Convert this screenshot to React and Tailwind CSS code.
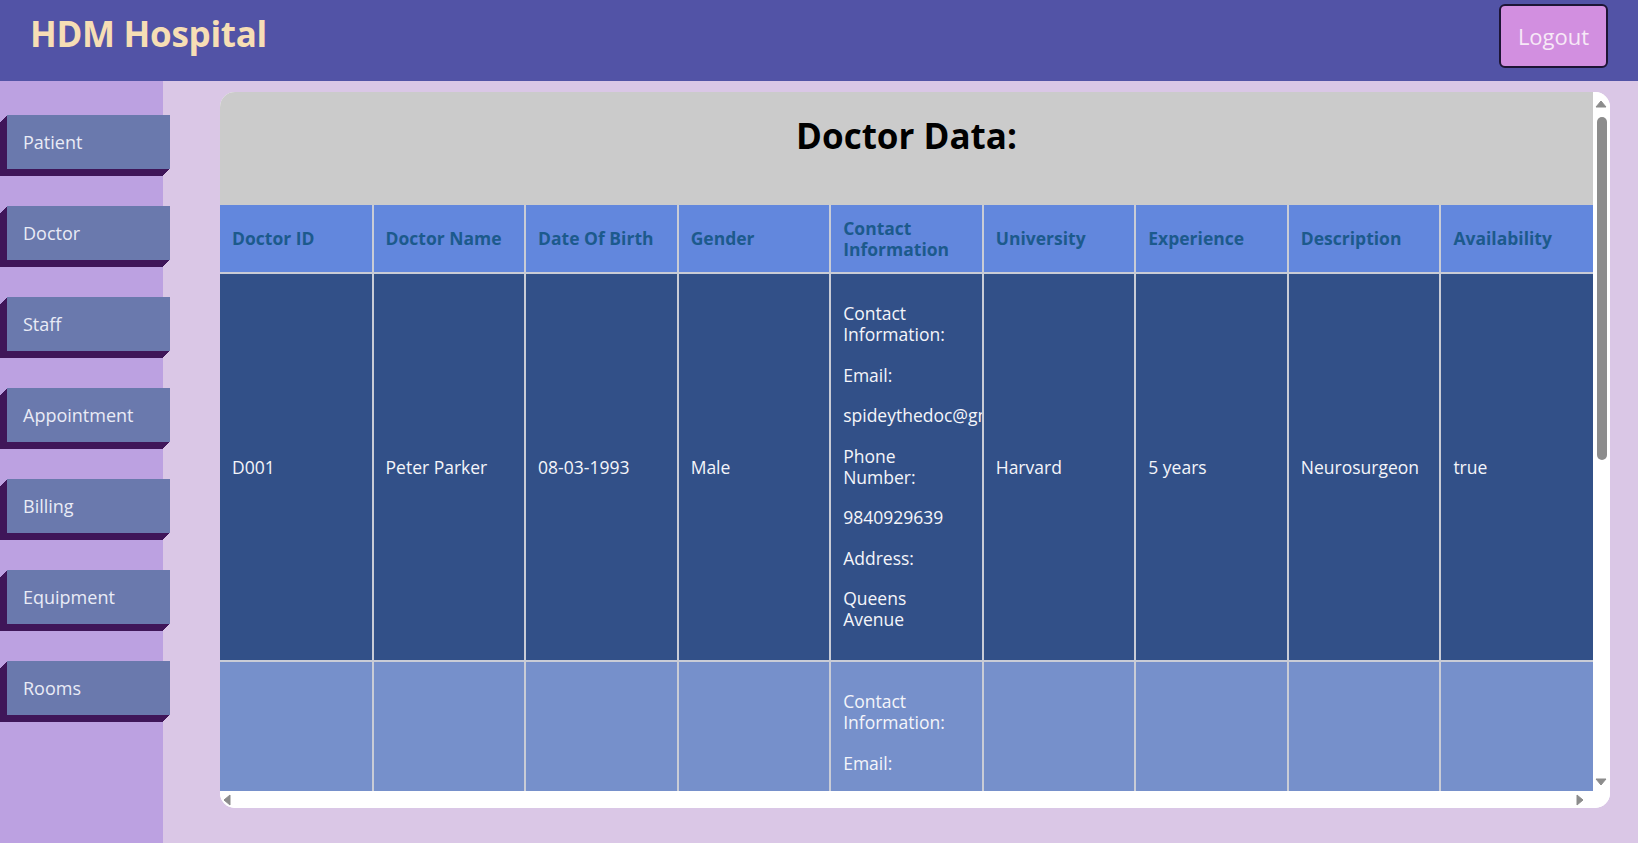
import React from 'react'

const menu = ['Patient', 'Doctor', 'Staff', 'Appointment', 'Billing', 'Equipment', 'Rooms']

const columns = [
  'Doctor ID',
  'Doctor Name',
  'Date Of Birth',
  'Gender',
  'Contact Information',
  'University',
  'Experience',
  'Description',
  'Availability',
]

const doctors = [
  {
    id: 'D001',
    name: 'Peter Parker',
    dob: '08-03-1993',
    gender: 'Male',
    email: 'spideythedoc@gmail.com',
    phone: '9840929639',
    address: 'Queens\nAvenue',
    university: 'Harvard',
    experience: '5 years',
    description: 'Neurosurgeon',
    available: 'true',
  },
  {
    id: 'D002',
    name: 'Stephen Strange',
    dob: '11-18-1980',
    gender: 'Male',
    email: 'strange@sanctum.org',
    phone: '9840112233',
    address: 'Bleecker\nStreet',
    university: 'Columbia',
    experience: '15 years',
    description: 'Cardiologist',
    available: 'false',
  },
  {
    id: 'D003',
    name: 'Jane Foster',
    dob: '04-22-1988',
    gender: 'Female',
    email: 'jfoster@culver.edu',
    phone: '9840556677',
    address: 'Puente\nAntiguo',
    university: 'Culver',
    experience: '8 years',
    description: 'Pediatrician',
    available: 'true',
  },
]

const bevel =
  'shadow-[-1px_1px_0_#3f1659,-2px_2px_0_#3f1659,-3px_3px_0_#3f1659,-4px_4px_0_#3f1659,-5px_5px_0_#3f1659,-6px_6px_0_#3f1659,-7px_7px_0_#3f1659]'

function Arrow({ dir, className = '' }) {
  const pts = {
    up: '1,7 6,1 11,7',
    down: '1,1 6,7 11,1',
    left: '7,1 1,6 7,11',
    right: '1,1 7,6 1,11',
  }[dir]
  const vertical = dir === 'up' || dir === 'down'
  return (
    <svg
      width={vertical ? 12 : 8}
      height={vertical ? 8 : 12}
      viewBox={vertical ? '0 0 12 8' : '0 0 8 12'}
      className={`block ${className}`}
    >
      <polygon points={pts} fill="#8c8c8c" stroke="#8c8c8c" strokeWidth="1" strokeLinejoin="round" />
    </svg>
  )
}

function Sidebar() {
  return (
    <aside className="w-[163px] shrink-0 bg-[#bca1e1] pt-[34px]">
      <nav className="flex flex-col gap-[37px]">
        {menu.map((item) => (
          <button
            key={item}
            className={`ml-[7px] w-[163px] h-[54px] bg-[#6a79ad] text-left pl-[16px] text-[18px] text-[#e9ebf6] relative z-10 ${bevel}`}
          >
            {item}
          </button>
        ))}
      </nav>
    </aside>
  )
}

function ContactCell({ doc }) {
  const parts = [
    'Contact\nInformation:',
    'Email:',
    doc.email,
    'Phone\nNumber:',
    doc.phone,
    'Address:',
    doc.address,
  ]
  return (
    <div className="flex flex-col gap-[19.5px] py-[18px] overflow-hidden">
      {parts.map((p, i) => (
        <p key={i} className="leading-[21px] whitespace-pre">
          {p}
        </p>
      ))}
    </div>
  )
}

function DoctorTable() {
  return (
    <div className="overflow-hidden min-h-0 min-w-0">
      <div className="h-[113px] bg-[#cbcbcb] flex justify-center pt-[20px]">
        <h2 className="text-[35px] leading-[48px] font-bold text-black">Doctor Data:</h2>
      </div>
      <table className="w-full table-fixed border-collapse text-[17.5px]">
        <thead>
          <tr className="h-[68px] bg-[#6287dd]">
            {columns.map((c) => (
              <th
                key={c}
                className="border-2 border-t-0 border-[#c9ccd6] first:border-l-0 last:border-r-0 px-[12px] text-left font-bold text-[#1c5a8c] leading-[21px]"
              >
                {c}
              </th>
            ))}
          </tr>
        </thead>
        <tbody>
          {doctors.map((d, i) => (
            <tr key={d.id} className={`${i % 2 === 0 ? 'bg-[#325088]' : 'bg-[#7690cb]'} text-[#f4f5fa]`}>
              {[d.id, d.name, d.dob, d.gender].map((v, j) => (
                <td key={j} className="border-2 border-[#c9ccd6] first:border-l-0 px-[12px] align-middle">
                  {v}
                </td>
              ))}
              <td className="border-2 border-[#c9ccd6] pl-[12px] pr-0 pt-[11px] pb-[12px] align-middle">
                <ContactCell doc={d} />
              </td>
              {[d.university, d.experience, d.description, d.available].map((v, j) => (
                <td key={j} className="border-2 border-[#c9ccd6] last:border-r-0 px-[12px] align-middle">
                  {v}
                </td>
              ))}
            </tr>
          ))}
        </tbody>
      </table>
    </div>
  )
}

export default function App() {
  return (
    <div className="h-[843px] flex flex-col font-['Open_Sans',sans-serif] bg-[#dac7e6]">
      <header className="h-[81px] shrink-0 bg-[#5253a6] flex items-start justify-between pl-[30px] pr-[30px]">
        <h1 className="mt-[10px] text-[35px] leading-[48px] font-bold text-[#f6deb5] tracking-[-0.3px]">
          HDM Hospital
        </h1>
        <button className="mt-[4px] w-[109px] h-[64px] bg-[#d28fe0] border-2 border-[#1d1535] rounded-[6px] text-[22px] text-[#f7e9f7]">
          Logout
        </button>
      </header>

      <div className="flex flex-1 min-h-0">
        <Sidebar />
        <main className="flex-1 pl-[57px] pr-[28px] pt-[11px] pb-[35px] min-h-0">
          <div className="h-full bg-white rounded-[15px] overflow-hidden grid grid-cols-[1fr_17px] grid-rows-[1fr_17px]">
            <DoctorTable />

            {/* vertical scrollbar */}
            <div className="flex flex-col items-center bg-white">
              <Arrow dir="up" className="mt-[8px] -ml-[1px]" />
              <div className="mt-[9px] w-[10px] h-[343px] rounded-full bg-[#8c8c8c]" />
              <div className="flex-1" />
              <Arrow dir="down" className="mb-[5px] -ml-[1px]" />
            </div>

            {/* horizontal scrollbar */}
            <div className="flex items-center justify-between bg-white pl-[3px] pr-[9px]">
              <Arrow dir="left" />
              <Arrow dir="right" />
            </div>
            <div className="bg-white" />
          </div>
        </main>
      </div>
    </div>
  )
}
